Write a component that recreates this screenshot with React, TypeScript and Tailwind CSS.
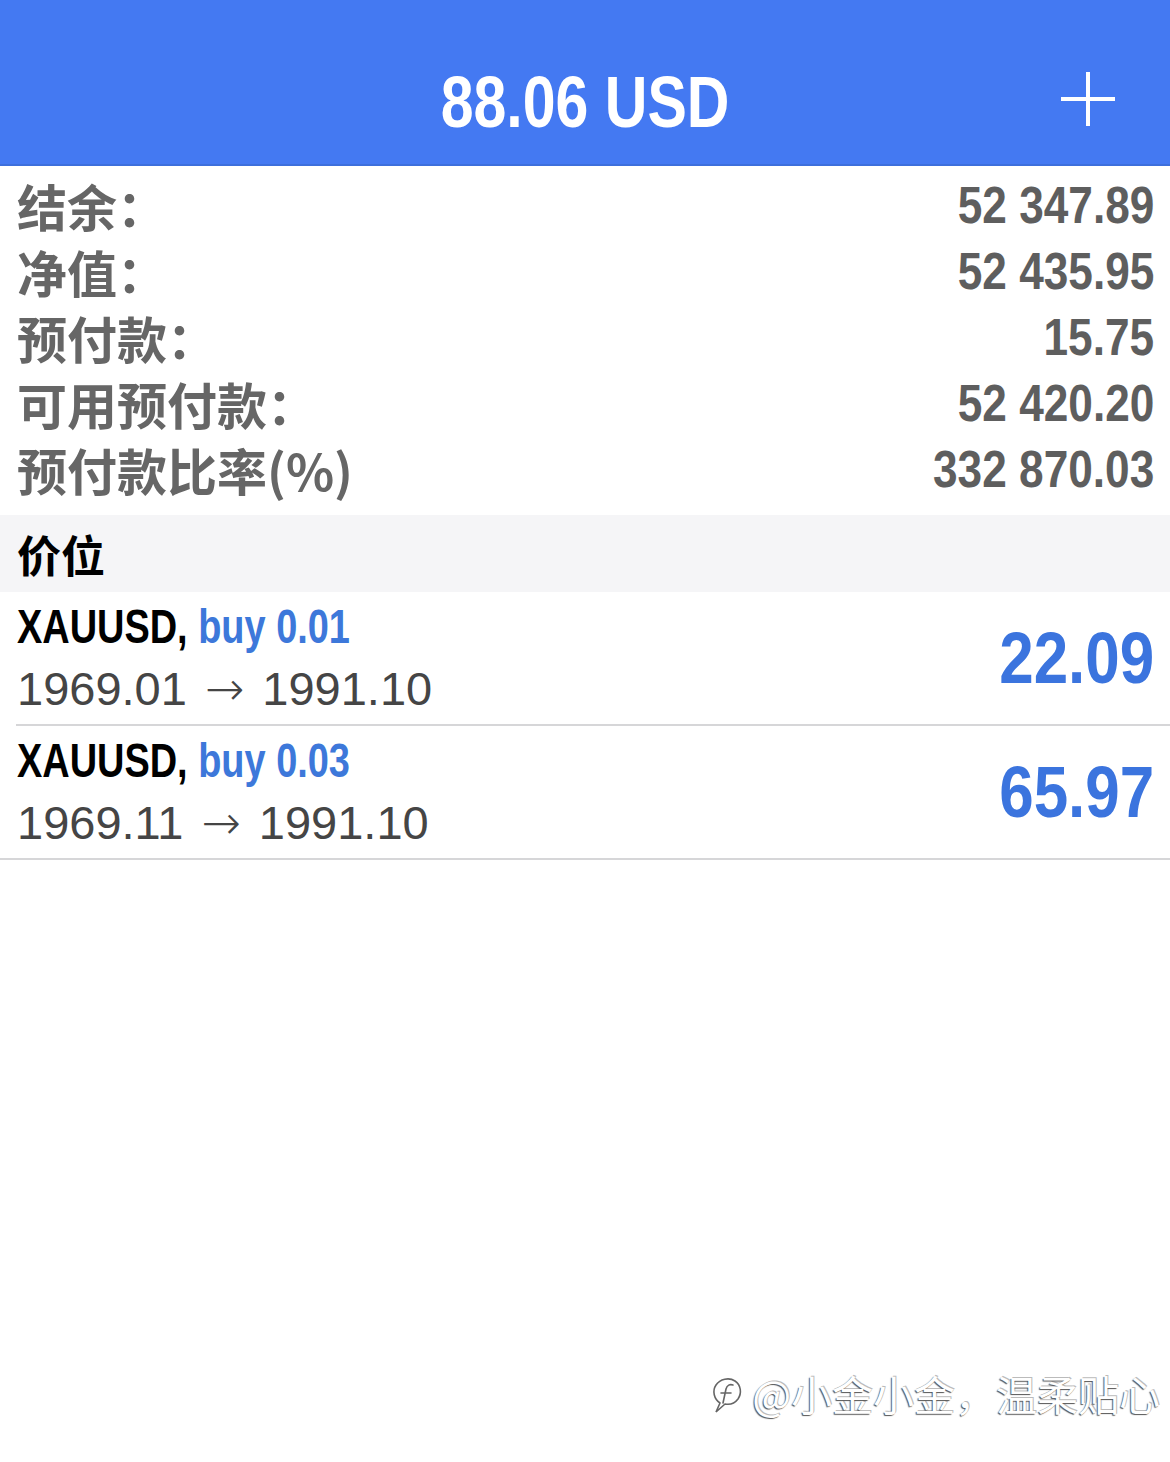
import React from "react";

const narrow = "font-['Liberation_Sans','Arial',sans-serif] font-bold inline-block";
const cjk = "font-['Noto_Sans_CJK_SC','Noto_Sans',sans-serif]";

const summary = [
  { label: "结余：", value: "52 347.89" },
  { label: "净值：", value: "52 435.95" },
  { label: "预付款：", value: "15.75" },
  { label: "可用预付款：", value: "52 420.20" },
  { label: "预付款比率(%)", value: "332 870.03" },
];

const positions = [
  { symbol: "XAUUSD,", side: "buy 0.01", open: "1969.01", close: "1991.10", profit: "22.09" },
  { symbol: "XAUUSD,", side: "buy 0.03", open: "1969.11", close: "1991.10", profit: "65.97" },
];

const PlusIcon = () => (
  <svg width="54" height="54" viewBox="0 0 54 54" fill="none">
    <path d="M27 0v54M0 27h54" stroke="white" strokeWidth="4" />
  </svg>
);

const MarkLogo = () => (
  <svg width="38" height="42" viewBox="0 0 38 42" fill="none">
    <g stroke="#666" strokeWidth="1.6" strokeLinecap="round">
      <path d="M10 31c-6-4-8-12-4-18 4-6 13-8 19-4 6 4 7 12 3 18-3 4-8 6-13 5l-9 8 4-9" />
      <path d="M13 31l3-14c1-4 4-5 7-4M11 21h10" />
    </g>
  </svg>
);

const App = () => {
  return (
    <div className="relative w-[1170px] h-[1462px] bg-white overflow-hidden">
      <div className="h-[166px] bg-[#4479f2] border-b-2 border-[#3d6fdc] grid grid-cols-[1fr_auto_1fr] items-start">
        <div />
        <div className="pt-[66px] flex justify-center">
          <span className={`${narrow} text-white text-[72px] leading-[72px] origin-center scale-x-[0.82]`}>
            88.06 USD
          </span>
        </div>
        <div className="flex justify-end pt-[72px] pr-[55px]">
          <PlusIcon />
        </div>
      </div>

      <div className="pt-[6px] pb-[13px]">
        {summary.map((row) => (
          <div key={row.label} className="h-[66px] flex items-center justify-between pl-[17px] pr-[16px]">
            <span className={`${cjk} font-semibold text-[50px] leading-none text-[#666666]`}>{row.label}</span>
            <span className={`${narrow} text-[52px] leading-none text-[#5e5e5e] origin-right scale-x-[0.85]`}>
              {row.value}
            </span>
          </div>
        ))}
      </div>

      <div className="h-[77px] bg-[#f5f5f7] flex items-center pl-[17px]">
        <span className={`${cjk} font-semibold text-[44px] leading-none text-black`}>价位</span>
      </div>

      {positions.map((p, i) => (
        <div
          key={i}
          className={`h-[134px] flex items-center justify-between border-b-2 border-[#d6d6d8] pr-[16px] ${
            i === 0 ? "ml-[16px] pl-[1px]" : "pl-[17px]"
          }`}
        >
          <div className="flex flex-col items-start">
            <div className={`${narrow} text-[48px] leading-[62px] whitespace-nowrap origin-left scale-x-[0.79]`}>
              <span className="text-black">{p.symbol}</span> <span className="text-[#3d78da]">{p.side}</span>
            </div>
            <div className="font-['Liberation_Sans',sans-serif] text-[47px] leading-[62px] text-[#454545] whitespace-nowrap">
              {p.open}
              <span className="font-['DejaVu_Sans',sans-serif] font-light mx-[18px]">→</span>
              {p.close}
            </div>
          </div>
          <span className={`${narrow} text-[72px] leading-none text-[#3b74de] origin-right scale-x-[0.86]`}>
            {p.profit}
          </span>
        </div>
      ))}

      <div className="absolute right-[10px] top-[1372px] flex items-center gap-[4px]">
        <MarkLogo />
        <span
          className={`${cjk} text-[41px] leading-none text-white [text-shadow:-1px_1px_1px_#555,1px_-1px_0_#bbb]`}
        >
          @小金小金，温柔贴心
        </span>
      </div>
    </div>
  );
};

export default App;
